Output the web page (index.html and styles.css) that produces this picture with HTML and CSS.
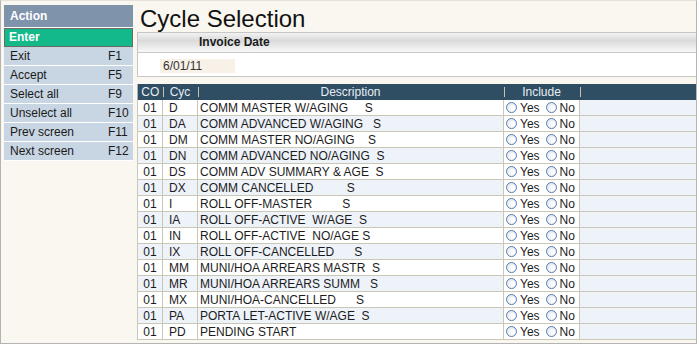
FILE: index.html
```html
<!DOCTYPE html>
<html>
<head>
<meta charset="utf-8">
<link rel="stylesheet" href="styles.css">
</head>
<body>
<div class="app">
  <aside class="panel">
    <div class="panel-title">Action</div>
    <div class="act enter">Enter</div>
    <div class="act"><span>Exit</span><span>F1</span></div>
    <div class="act"><span>Accept</span><span>F5</span></div>
    <div class="act"><span>Select all</span><span>F9</span></div>
    <div class="act"><span>Unselect all</span><span>F10</span></div>
    <div class="act"><span>Prev screen</span><span>F11</span></div>
    <div class="act"><span>Next screen</span><span>F12</span></div>
  </aside>
  <main class="main">
    <h1 class="title">Cycle Selection</h1>
    <section class="invoice">
      <div class="inv-head">Invoice Date</div>
      <div class="inv-body"><span class="field">6/01/11</span></div>
    </section>
    <table class="grid">
      <colgroup>
        <col class="c-co"><col class="c-cyc"><col class="c-desc"><col class="c-inc"><col>
      </colgroup>
      <thead>
        <tr><th>CO</th><th class="sep">Cyc</th><th class="sep">Description</th><th class="sep">Include</th><th class="sep"></th></tr>
      </thead>
      <tbody>
        <tr><td class="co">01</td><td class="cyc">D</td><td class="desc">COMM MASTER W/AGING     S</td><td class="inc"><span class="opt"><span class="radio"></span>Yes</span><span class="opt"><span class="radio"></span>No</span></td><td class="fill"></td></tr>
        <tr><td class="co">01</td><td class="cyc">DA</td><td class="desc">COMM ADVANCED W/AGING   S</td><td class="inc"><span class="opt"><span class="radio"></span>Yes</span><span class="opt"><span class="radio"></span>No</span></td><td class="fill"></td></tr>
        <tr><td class="co">01</td><td class="cyc">DM</td><td class="desc">COMM MASTER NO/AGING    S</td><td class="inc"><span class="opt"><span class="radio"></span>Yes</span><span class="opt"><span class="radio"></span>No</span></td><td class="fill"></td></tr>
        <tr><td class="co">01</td><td class="cyc">DN</td><td class="desc">COMM ADVANCED NO/AGING  S</td><td class="inc"><span class="opt"><span class="radio"></span>Yes</span><span class="opt"><span class="radio"></span>No</span></td><td class="fill"></td></tr>
        <tr><td class="co">01</td><td class="cyc">DS</td><td class="desc">COMM ADV SUMMARY &amp; AGE  S</td><td class="inc"><span class="opt"><span class="radio"></span>Yes</span><span class="opt"><span class="radio"></span>No</span></td><td class="fill"></td></tr>
        <tr><td class="co">01</td><td class="cyc">DX</td><td class="desc">COMM CANCELLED          S</td><td class="inc"><span class="opt"><span class="radio"></span>Yes</span><span class="opt"><span class="radio"></span>No</span></td><td class="fill"></td></tr>
        <tr><td class="co">01</td><td class="cyc">I</td><td class="desc">ROLL OFF-MASTER         S</td><td class="inc"><span class="opt"><span class="radio"></span>Yes</span><span class="opt"><span class="radio"></span>No</span></td><td class="fill"></td></tr>
        <tr><td class="co">01</td><td class="cyc">IA</td><td class="desc">ROLL OFF-ACTIVE  W/AGE  S</td><td class="inc"><span class="opt"><span class="radio"></span>Yes</span><span class="opt"><span class="radio"></span>No</span></td><td class="fill"></td></tr>
        <tr><td class="co">01</td><td class="cyc">IN</td><td class="desc">ROLL OFF-ACTIVE  NO/AGE S</td><td class="inc"><span class="opt"><span class="radio"></span>Yes</span><span class="opt"><span class="radio"></span>No</span></td><td class="fill"></td></tr>
        <tr><td class="co">01</td><td class="cyc">IX</td><td class="desc">ROLL OFF-CANCELLED      S</td><td class="inc"><span class="opt"><span class="radio"></span>Yes</span><span class="opt"><span class="radio"></span>No</span></td><td class="fill"></td></tr>
        <tr><td class="co">01</td><td class="cyc">MM</td><td class="desc">MUNI/HOA ARREARS MASTR  S</td><td class="inc"><span class="opt"><span class="radio"></span>Yes</span><span class="opt"><span class="radio"></span>No</span></td><td class="fill"></td></tr>
        <tr><td class="co">01</td><td class="cyc">MR</td><td class="desc">MUNI/HOA ARREARS SUMM   S</td><td class="inc"><span class="opt"><span class="radio"></span>Yes</span><span class="opt"><span class="radio"></span>No</span></td><td class="fill"></td></tr>
        <tr><td class="co">01</td><td class="cyc">MX</td><td class="desc">MUNI/HOA-CANCELLED      S</td><td class="inc"><span class="opt"><span class="radio"></span>Yes</span><span class="opt"><span class="radio"></span>No</span></td><td class="fill"></td></tr>
        <tr><td class="co">01</td><td class="cyc">PA</td><td class="desc">PORTA LET-ACTIVE W/AGE  S</td><td class="inc"><span class="opt"><span class="radio"></span>Yes</span><span class="opt"><span class="radio"></span>No</span></td><td class="fill"></td></tr>
        <tr><td class="co">01</td><td class="cyc">PD</td><td class="desc">PENDING START</td><td class="inc"><span class="opt"><span class="radio"></span>Yes</span><span class="opt"><span class="radio"></span>No</span></td><td class="fill"></td></tr>
      </tbody>
    </table>
  </main>
</div>
</body>
</html>
```

FILE: styles.css
```css
html, body {
  margin: 0;
  padding: 0;
  background: #faf6f0;
}

.app {
  width: 697px;
  height: 344px;
  box-sizing: border-box;
  border: 1px solid #b4b4b4;
  border-top-color: #e6e2da;
  background: #faf6f0;
  display: flex;
  align-items: flex-start;
  gap: 4px;
  padding: 4px 0 0 3px;
  overflow: hidden;
  font-family: "Liberation Sans", Arial, sans-serif;
  font-size: 12px;
  color: #1c1c1c;
}

/* ---------- left action panel ---------- */
.panel {
  width: 129px;
  flex: none;
  display: flex;
  flex-direction: column;
}

.panel-title {
  height: 22px;
  line-height: 22px;
  padding-left: 6px;
  background: #7f93ab;
  color: #fff;
  font-weight: bold;
  border-bottom: 1px solid #fff;
}

.act {
  height: 18px;
  line-height: 18px;
  padding-left: 6px;
  background: #c8d5e2;
  border-bottom: 1px solid #fff;
  display: grid;
  grid-template-columns: 98px 1fr;
  color: #1a1a1a;
}

.act.enter {
  display: block;
  height: 17px;
  line-height: 17px;
  padding-left: 4px;
  background: #13b98b;
  border: 1px solid #6f6a5e;
  color: #fff;
  font-weight: bold;
}

/* ---------- main area ---------- */
.main {
  flex: 1;
  min-width: 0;
  display: flex;
  flex-direction: column;
}

.title {
  margin: 0;
  height: 27px;
  line-height: 27px;
  padding-left: 3px;
  font-size: 24px;
  font-weight: normal;
  color: #111;
}

.invoice {
  border: 1px solid #c6c6c6;
  border-right: none;
  background: #fff;
}

.inv-head {
  height: 19px;
  line-height: 19px;
  padding-left: 61px;
  font-weight: bold;
  color: #1a1a1a;
  border-bottom: 1px solid #c8c8c8;
  background: linear-gradient(to bottom, #f2f2f2 0%, #dadada 40%, #ececec 75%, #f8f8f8 100%);
}

.inv-body {
  height: 23px;
  box-sizing: border-box;
  padding: 6px 0 0 22px;
  display: flex;
  align-items: flex-start;
}

.field {
  width: 75px;
  height: 14px;
  line-height: 14px;
  box-sizing: border-box;
  padding-left: 3px;
  background: #f8f1e8;
  color: #333;
}

/* ---------- grid ---------- */
.grid {
  margin-top: 7px;
  width: 100%;
  table-layout: fixed;
  border-collapse: collapse;
  border-left: 1px solid #a9b3c3;
  border-bottom: 1px solid #7c7c7c;
}

.c-co { width: 25px; }
.c-cyc { width: 35px; }
.c-desc { width: 306px; }
.c-inc { width: 76px; }

.grid th {
  height: 16px;
  padding: 0;
  background: #2f4d63;
  color: #e6edf3;
  font-weight: normal;
  text-align: center;
  line-height: 16px;
}

.grid th.sep {
  background: linear-gradient(#c9c3ad, #c9c3ad) left center / 1px 10px no-repeat, #2f4d63;
}

.grid td {
  height: 15px;
  padding: 0;
  line-height: 14px;
  border: 1px solid #c9c7b6;
  border-top: none;
  white-space: pre;
  overflow: hidden;
}

.grid tbody tr:nth-child(odd) td { background: #ffffff; }
.grid tbody tr:nth-child(even) td { background: #eef2f9; }

.grid td.co { text-align: center; }
.grid td.cyc { padding-left: 6px; }
.grid td.desc { padding-left: 2px; }

.grid tbody tr td.inc {
  background: #ffffff;
  padding-left: 2px;
}

.grid tbody tr td.fill {
  background: #eef2f9;
  border-right: none;
}

.opt {
  display: inline-flex;
  align-items: center;
  vertical-align: top;
  height: 14px;
}

.opt + .opt { margin-left: 6px; }

.radio {
  width: 11px;
  height: 11px;
  box-sizing: border-box;
  border: 1px solid #5a7ea8;
  border-radius: 50%;
  margin-right: 3px;
  background: radial-gradient(circle at 65% 65%, #ffffff 0%, #f4f6fa 40%, #d3dbe7 100%);
}
```
